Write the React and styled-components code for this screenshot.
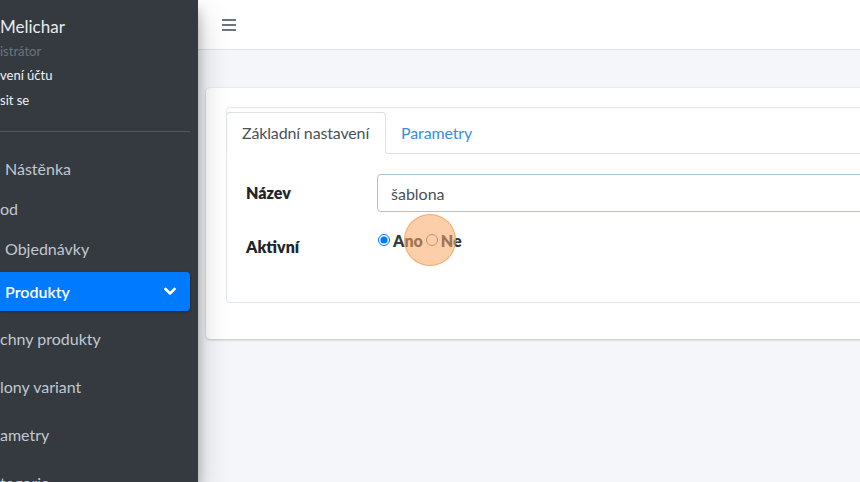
import React from 'react'
import styled, { createGlobalStyle } from 'styled-components';

const GlobalStyle = createGlobalStyle`
  html, body {
    margin: 0;
    padding: 0;
    overflow: hidden;
  }
  body {
    font-family: "Source Sans Pro", "Lato", "Noto Sans", sans-serif;
    background: #f4f6f9;
    color: #212529;
  }
`;

const Wrapper = styled.div`
  display: flex;
  width: 860px;
  height: 482px;
  overflow: hidden;
`;

const Sidebar = styled.aside`
  position: relative;
  z-index: 2;
  flex: 0 0 198px;
  background: #343a40;
  box-shadow: 0 14px 28px rgba(0, 0, 0, 0.25), 0 10px 10px rgba(0, 0, 0, 0.22);
  padding-right: 8px;
  box-sizing: border-box;
  display: flex;
  flex-direction: column;
  overflow: hidden;
  & > * {
    flex-shrink: 0;
  }
`;

const UserPanel = styled.div`
  display: flex;
  flex-direction: column;
  padding-top: 14px;
`;

const UserName = styled.div`
  font-size: 17px;
  line-height: 25px;
  color: #e8eaed;
  white-space: nowrap;
`;

const UserLine = styled.div`
  font-size: 13px;
  line-height: ${p => (p.$muted ? 24 : 25)}px;
  color: ${p => (p.$muted ? '#6c757d' : '#f1f2f4')};
  white-space: nowrap;
`;

const Divider = styled.div`
  margin-top: 18px;
  height: 1px;
  background: #4f5962;
`;

const Nav = styled.nav`
  display: flex;
  flex-direction: column;
  margin-top: 16px;
  & > * {
    flex-shrink: 0;
  }
`;

const NavItem = styled.div`
  display: flex;
  align-items: center;
  justify-content: space-between;
  height: ${p => p.$h || 40}px;
  margin-top: ${p => p.$mt || 0}px;
  padding-left: ${p => (p.$indent ? 5 : 0)}px;
  padding-right: 14px;
  border-radius: 0 4px 4px 0;
  font-size: 16px;
  white-space: nowrap;
  color: ${p => (p.$active ? '#fff' : '#c2c7d0')};
  background: ${p => (p.$active ? '#007bff' : 'transparent')};
  box-shadow: ${p => (p.$active ? '0 1px 3px rgba(0,0,0,.12), 0 1px 2px rgba(0,0,0,.24)' : 'none')};
  font-weight: ${p => (p.$active ? 600 : 400)};
`;

const Main = styled.div`
  flex: 1;
  display: flex;
  flex-direction: column;
  min-width: 0;
`;

const Navbar = styled.header`
  height: 49px;
  background: #fff;
  border-bottom: 1px solid #dee2e6;
  display: flex;
  align-items: center;
  padding-left: 24px;
  flex-shrink: 0;
`;

const Burger = styled.div`
  width: 14px;
  display: flex;
  flex-direction: column;
  gap: 3px;
  span {
    display: block;
    height: 2px;
    background: #6c757d;
  }
`;

const Content = styled.div`
  padding: 38px 0 0 8px;
`;

const Card = styled.div`
  width: 760px;
  background: #fff;
  border-radius: 4px;
  box-shadow: 0 0 1px rgba(0, 0, 0, 0.125), 0 1px 3px rgba(0, 0, 0, 0.2);
  padding: 19px 20px 20px;
`;

const TabBox = styled.div`
  border: 1px solid #e3e6ea;
  border-radius: 4px;
  padding-top: 4px;
  margin-bottom: 16px;
`;

const Tabs = styled.div`
  display: flex;
  border-bottom: 1px solid #dee2e6;
`;

const Tab = styled.div`
  padding: 8px 16px 8px 15px;
  margin-bottom: -1px;
  margin-left: -1px;
  font-size: 16px;
  line-height: 24px;
  letter-spacing: -0.15px;
  border: 1px solid ${p => (p.$active ? '#dee2e6' : 'transparent')};
  border-bottom-color: ${p => (p.$active ? '#fff' : 'transparent')};
  border-radius: 4px 4px 0 0;
  background: ${p => (p.$active ? '#fff' : 'transparent')};
  color: ${p => (p.$active ? '#495057' : '#3b8de0')};
`;

const TabPane = styled.div`
  padding: 20px 19px;
`;

const FormRow = styled.div`
  display: grid;
  grid-template-columns: 131px 1fr;
  align-items: start;
  margin-bottom: 16px;
`;

const Label = styled.label`
  font-weight: 800;
  font-size: 16px;
  line-height: 24px;
  padding: 7px 0;
  color: #212529;
`;

const Input = styled.input`
  box-sizing: border-box;
  height: 38px;
  width: 100%;
  border: 1px solid #a9c4da;
  border-radius: 4px;
  padding: 6px 13px;
  font-family: inherit;
  font-size: 16px;
  color: #495057;
  outline: none;
`;

const RadioGroup = styled.div`
  position: relative;
  display: flex;
  align-items: center;
  height: 24px;
`;

const RadioLabel = styled.label`
  display: flex;
  align-items: center;
  font-weight: 800;
  font-size: 16px;
  color: #343a40;
  input {
    margin: 0 3px 0 ${p => p.$gap || 1}px;
    width: 12px;
    height: 12px;
    accent-color: #007bff;
  }
`;

const ClickMark = styled.div`
  position: absolute;
  left: 27px;
  top: -14px;
  width: 50px;
  height: 50px;
  border-radius: 50%;
  background: rgba(250, 165, 100, 0.55);
  border: 1.5px solid rgba(240, 160, 90, 0.8);
  pointer-events: none;
`;

const Chevron = () => (
  <svg width="12" height="9" viewBox="0 0 12 9">
    <polyline points="1.5,2 6,6.5 10.5,2" fill="none" stroke="#fff" strokeWidth="2.6" strokeLinecap="round" strokeLinejoin="round" />
  </svg>
);

const navItems = [
  { label: 'Nástěnka', indent: true },
  { label: 'od' },
  { label: 'Objednávky', indent: true },
  { label: 'Produkty', indent: true, active: true, h: 39, mt: 4 },
  { label: 'chny produkty', h: 48, mt: 3 },
  { label: 'lony variant', h: 48 },
  { label: 'ametry', h: 48 },
  { label: 'tegorie', h: 48 },
];

const App = () => {
  return (
    <Wrapper>
      <GlobalStyle />
      <Sidebar>
        <UserPanel>
          <UserName>Melichar</UserName>
          <UserLine $muted>istrátor</UserLine>
          <UserLine>vení účtu</UserLine>
          <UserLine>sit se</UserLine>
        </UserPanel>
        <Divider />
        <Nav>
          {navItems.map(item => (
            <NavItem key={item.label} $indent={item.indent} $active={item.active} $h={item.h} $mt={item.mt}>
              <span>{item.label}</span>
              {item.active && <Chevron />}
            </NavItem>
          ))}
        </Nav>
      </Sidebar>
      <Main>
        <Navbar>
          <Burger><span /><span /><span /></Burger>
        </Navbar>
        <Content>
          <Card>
            <TabBox>
              <Tabs>
                <Tab $active>Základní nastavení</Tab>
                <Tab>Parametry</Tab>
              </Tabs>
              <TabPane>
                <FormRow>
                  <Label>Název</Label>
                  <Input defaultValue="šablona" />
                </FormRow>
                <FormRow>
                  <Label>Aktivní</Label>
                  <RadioGroup>
                    <RadioLabel><input type="radio" name="active" defaultChecked />Ano</RadioLabel>
                    <RadioLabel $gap={3}><input type="radio" name="active" />Ne</RadioLabel>
                    <ClickMark />
                  </RadioGroup>
                </FormRow>
              </TabPane>
            </TabBox>
          </Card>
        </Content>
      </Main>
    </Wrapper>
  );
}

export default App
